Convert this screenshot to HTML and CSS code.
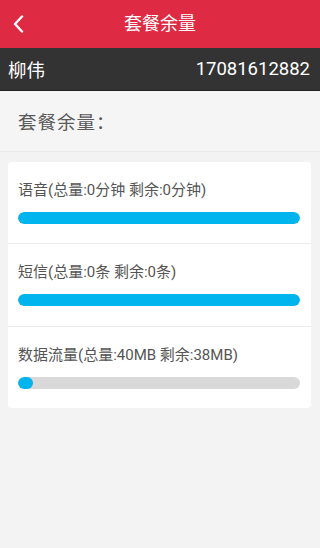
FILE: index.html
```html
<!DOCTYPE html>
<html lang="zh">
<head>
<meta charset="utf-8">
<title>套餐余量</title>
<link rel="stylesheet" href="styles.css">
</head>
<body>
<header class="topbar">
  <span class="back">
    <svg width="12" height="18" viewBox="0 0 12 18"><path d="M10 1.5 L3 9 L10 16.5" fill="none" stroke="#fff" stroke-width="2.4" stroke-linecap="round" stroke-linejoin="round"/></svg>
  </span>
  <h1 class="title">套餐余量</h1>
</header>
<div class="userbar">
  <span class="name">柳伟</span>
  <span class="phone">17081612882</span>
</div>
<div class="section">套餐余量：</div>
<div class="card">
  <div class="row">
    <div class="label">语音(总量:0分钟 剩余:0分钟)</div>
    <div class="track"><div class="fill" style="width:100%"></div></div>
  </div>
  <div class="row">
    <div class="label">短信(总量:0条 剩余:0条)</div>
    <div class="track"><div class="fill" style="width:100%"></div></div>
  </div>
  <div class="row">
    <div class="label">数据流量(总量:40MB 剩余:38MB)</div>
    <div class="track"><div class="fill" style="width:5.3%"></div></div>
  </div>
</div>
</body>
</html>
```
FILE: styles.css
```css
html, body {
  margin: 0;
  padding: 0;
}
body {
  width: 320px;
  height: 548px;
  background: #f3f3f3;
  font-family: Roboto, "Noto Sans CJK SC", sans-serif;
  overflow: hidden;
}
.topbar {
  height: 48px;
  background: #de2a42;
  display: flex;
  align-items: center;
  justify-content: center;
  position: relative;
}
.back {
  position: absolute;
  left: 12px;
  top: 15px;
  width: 12px;
  height: 18px;
  display: flex;
}
.title {
  margin: 0;
  color: #fff;
  font-size: 18px;
  font-weight: normal;
  line-height: 48px;
}
.userbar {
  height: 43px;
  background: #333333;
  border-bottom: 1px solid #222;
  box-sizing: border-box;
  display: flex;
  align-items: center;
  justify-content: space-between;
  padding: 0 10px 0 8px;
  color: #fff;
  font-size: 18.5px;
}
.section {
  height: 61px;
  box-sizing: border-box;
  background: #f5f5f5;
  border-bottom: 1px solid #e9e9e9;
  padding-left: 18px;
  display: flex;
  align-items: center;
  font-size: 18.5px;
  letter-spacing: 1px;
  color: #5a5a5a;
}
.card {
  margin: 10px 9px 0 8px;
  background: #fff;
  border-radius: 4px;
}
.row {
  height: 82px;
  box-sizing: border-box;
  padding: 16px 11px 0 10px;
  border-bottom: 1px solid #ececec;
}
.row:nth-child(2) {
  height: 83px;
}
.row:last-child {
  border-bottom: none;
  height: 81px;
}
.label {
  font-size: 15px;
  line-height: 24px;
  color: #555;
  height: 24px;
  white-space: nowrap;
}
.track {
  margin-top: 10px;
  height: 12px;
  border-radius: 6px;
  background: #d9d9d9;
  overflow: hidden;
}
.fill {
  height: 100%;
  background: #00b5ee;
  border-radius: 6px;
}
```
